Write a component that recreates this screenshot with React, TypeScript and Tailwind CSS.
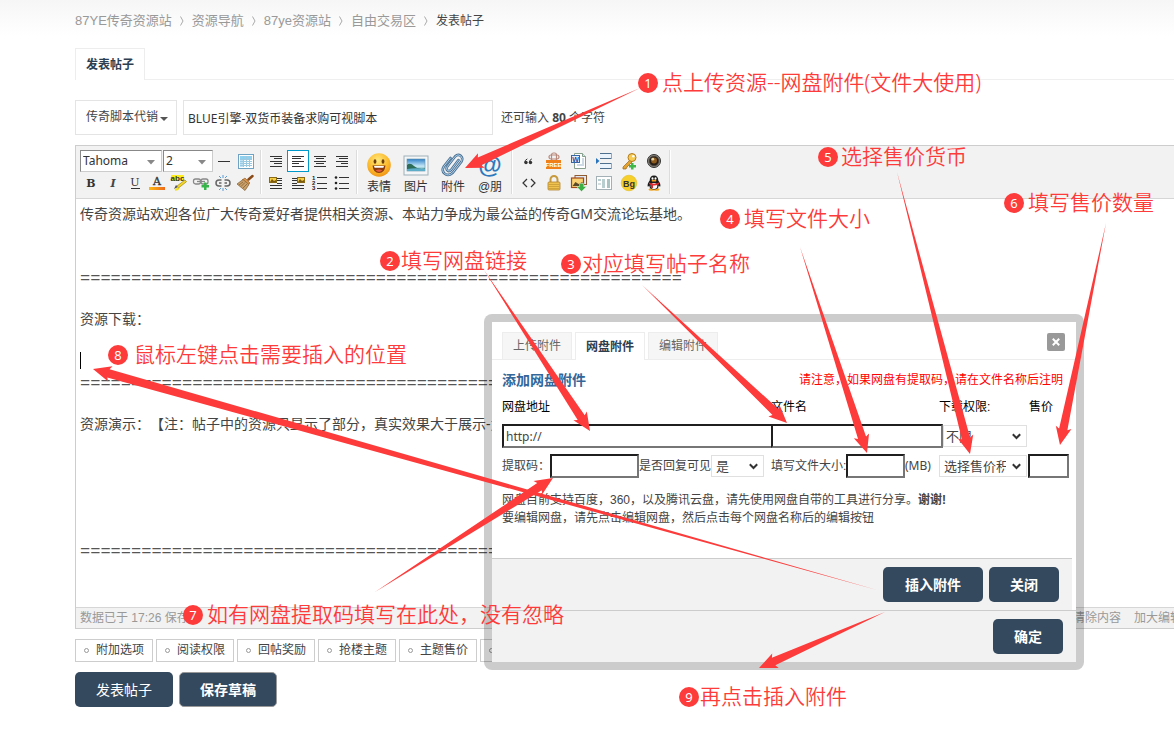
import React from "react";

const ui = "font-['Liberation_Sans','Noto_Sans_CJK_SC',sans-serif]";
const yahei = "font-['Noto_Sans','Noto_Sans_CJK_SC',sans-serif]";

/* ---------- toolbar drawings ---------- */

function Lines({ rows, top = 4 }: { rows: [number, number][]; top?: number }) {
  return (
    <g stroke="#333" strokeWidth="1" shapeRendering="crispEdges">
      {rows.map(([a, b], i) => (
        <line key={i} x1={a} x2={b} y1={top + i * 2.5} y2={top + i * 2.5} />
      ))}
    </g>
  );
}

function Glyph({ children, size = 18 }: { children: React.ReactNode; size?: number }) {
  return (
    <svg width={size} height={size} viewBox={`0 0 ${size} ${size}`} aria-hidden="true">
      {children}
    </svg>
  );
}

const serif = "'DejaVu Serif', serif";
const sans = "'Liberation Sans', sans-serif";

const icons: Record<string, React.ReactNode> = {
  hr: <path d="M3 9.5h12" stroke="#333" strokeWidth="1" shapeRendering="crispEdges" />,
  table: (
    <g shapeRendering="crispEdges">
      <rect x="1.5" y="2.5" width="15" height="14" fill="#fff" stroke="#6fa3c4" />
      <rect x="3" y="4" width="12" height="3" fill="#8fd0ee" />
      <rect x="3" y="7" width="3" height="8" fill="#bfe3f5" />
      <path d="M3 7.5h12M3 9.5h12M3 11.5h12M3 13.5h12M6.5 4v11M9.5 4v11M12.5 4v11" stroke="#9cc9e0" strokeWidth="1" fill="none" />
    </g>
  ),
  bold: <text x="9" y="13" textAnchor="middle" fontFamily={serif} fontWeight="700" fontSize="11" fill="#333">B</text>,
  italic: <text x="9" y="13" textAnchor="middle" fontFamily={serif} fontStyle="italic" fontWeight="700" fontSize="11" fill="#444">I</text>,
  underline: (
    <g>
      <text x="9" y="12" textAnchor="middle" fontFamily={serif} fontSize="11" fill="#333">U</text>
      <path d="M5 14.5h9" stroke="#333" shapeRendering="crispEdges" />
    </g>
  ),
  color: (
    <g>
      <defs>
        <linearGradient id="bar" x1="0" x2="1">
          <stop offset="0" stopColor="#fdb913" />
          <stop offset="1" stopColor="#ee6a1b" />
        </linearGradient>
      </defs>
      <text x="9" y="11" textAnchor="middle" fontFamily={serif} fontSize="11" fill="#333" stroke="#333" strokeWidth="0.3">A</text>
      <rect x="1" y="13" width="16" height="3" fill="url(#bar)" />
    </g>
  ),
  marker: (
    <g>
      <rect x="1" y="1" width="13" height="6" fill="#ffee1c" />
      <text x="7.500" y="6.500" textAnchor="middle" fontFamily={sans} fontSize="8" fontWeight="700" fill="#333">abc</text>
      <path d="M4 15l2-4 2 2z" fill="#555" />
      <path d="M5 16q3-1 4-2" stroke="#f5e11a" strokeWidth="2" fill="none" />
      <path d="M7 12l8-6 1.500 1.700-8 6.300z" fill="#f6d724" stroke="#a08a1a" strokeWidth=".7" />
    </g>
  ),
  link: (
    <g>
      <g fill="none" stroke="#888" strokeWidth="1.300">
        <rect x="1.500" y="5" width="7" height="5" rx="2" />
        <rect x="9" y="5" width="7" height="5" rx="2" />
        <path d="M5 7.500h8" />
      </g>
      <path d="M12 8.500h2.500v2.500H17v2.500h-2.500V16H12v-2.500H9.500V11H12z" fill="#36b54a" />
    </g>
  ),
  unlink: (
    <g fill="none">
      <g stroke="#666" strokeWidth="1.500">
        <path d="M7.500 6H5a3 3 0 000 6h2.500M10.500 6H13a3 3 0 010 6h-2.500M5 9h2.500M10.500 9H13" />
      </g>
      <path d="M5 2l2 2M9 1v3M13 2l-2 2M5 16l2-2M9 17v-3M13 16l-2-2" stroke="#5b9bd5" strokeWidth="1" />
    </g>
  ),
  brush: (
    <g>
      <path d="M16.500 2l-4 3.500" stroke="#8a4a16" strokeWidth="2.500" strokeLinecap="round" />
      <path d="M9 4l5 5-2 2-6-5z" fill="#d9944a" stroke="#8d5722" strokeWidth=".6" />
      <path d="M7 5.500l6 5-4 6L1 10z" fill="#caa06a" stroke="#7b5a31" strokeWidth=".7" />
      <path d="M3 11l4-3M5 12.500l4-4M7 14l4-4" stroke="#7b5a31" strokeWidth=".7" />
    </g>
  ),
  indent: <Lines rows={[[3, 15], [7, 15], [3, 15], [7, 15], [3, 15]]} />,
  left: <Lines rows={[[3, 15], [3, 12], [3, 15], [3, 10], [3, 15]]} />,
  center: <Lines rows={[[3, 15], [5, 13], [3, 15], [5, 13], [3, 15]]} />,
  right: <Lines rows={[[3, 15], [6, 15], [3, 15], [8, 15], [3, 15]]} />,
  floatLeft: (
    <g>
      <Lines rows={[[10, 15], [10, 15], [10, 15], [3, 15], [3, 15]]} top={4} />
      <rect x="2.500" y="3.500" width="7" height="5" fill="#f7cf43" stroke="#8a6a14" />
      <path d="M3 8l2-3 2 2 2-1v2z" fill="#7a5a10" />
    </g>
  ),
  floatRight: (
    <g>
      <Lines rows={[[3, 8], [3, 8], [3, 8], [3, 15], [3, 15]]} top={4} />
      <rect x="8.500" y="3.500" width="7" height="5" fill="#f7cf43" stroke="#8a6a14" />
      <path d="M9 8l2-3 2 2 2-1v2z" fill="#7a5a10" />
    </g>
  ),
  ordered: (
    <g>
      <g fontFamily={sans} fontWeight="700" fontSize="6" fill="#222">
        <text x="1" y="6">1</text>
        <text x="1" y="11">2</text>
        <text x="1" y="16">3</text>
      </g>
      <path d="M6 3.500h10M6 9.500h10M6 14.500h10" stroke="#333" shapeRendering="crispEdges" />
    </g>
  ),
  bullets: (
    <g>
      <circle cx="3" cy="3.500" r="1.300" fill="#222" />
      <circle cx="3" cy="9" r="1.300" fill="#222" />
      <circle cx="3" cy="14.500" r="1.300" fill="#222" />
      <path d="M6 3.500h10M6 9.500h10M6 14.500h10" stroke="#333" shapeRendering="crispEdges" />
    </g>
  ),
  quote: (
    <g fill="#333">
      <circle cx="6" cy="10.500" r="1.700" />
      <circle cx="10.500" cy="10.500" r="1.700" />
      <path d="M4.800 10.500q0-2.500 2.500-3.600M9.300 10.500q0-2.500 2.500-3.600" stroke="#333" strokeWidth="1" fill="none" />
    </g>
  ),
  free: (
    <g>
      <g fill="none" stroke="#b98a7c" strokeWidth="1.200">
        <rect x="6.500" y="1" width="5" height="8" rx="2" />
        <rect x="4" y="3" width="10" height="4" rx="2" />
      </g>
      <rect x="1" y="8" width="15" height="9" fill="#f0801a" />
      <text x="8.500" y="15" textAnchor="middle" fontFamily={sans} fontWeight="700" fontSize="6" fill="#fff">FREE</text>
    </g>
  ),
  word: (
    <g>
      <path d="M4.500 1.500h8l3 3v12h-11z" fill="#fff" stroke="#86a08d" />
      <path d="M12.500 1.500v3h3" fill="#d8e6ee" stroke="#86a08d" />
      <path d="M12 7h2M12 9h2M12 11h2M7 13h7" stroke="#9bb4c9" />
      <rect x="1.500" y="3.500" width="8" height="7" fill="#e8f1fb" stroke="#3567a8" />
      <text x="5.500" y="9.500" textAnchor="middle" fontFamily={sans} fontWeight="700" fontSize="7" fill="#1c4f9c">W</text>
    </g>
  ),
  page: (
    <g>
      <path d="M5 1.500h11.500v5H5M5 16.500h11.500v-5H5" fill="#eaf3fb" />
      <path d="M5 1.500h11M5 6.500h12M5 11.500h12M5 16.500h11" stroke="#4f6f8e" shapeRendering="crispEdges" />
      <path d="M16.500 1v6M16.500 11v6" stroke="#8eabc5" />
      <path d="M1 6l3.500 3L1 12z" fill="#2874bd" />
    </g>
  ),
  key: (
    <g>
      <path d="M10 8l-7 7v2h3l1-2 5-5z" fill="#e5a32e" stroke="#96651b" strokeWidth=".7" />
      <circle cx="12" cy="5.500" r="4" fill="#f6cc52" stroke="#b47b20" />
      <circle cx="13.300" cy="4.300" r="1.200" fill="#fff" />
      <path d="M11 11h2.500v2H16v2.500h-2.500v2H11v-2H9V13h2z" fill="#41b649" />
    </g>
  ),
  lens: (
    <g>
      <circle cx="9" cy="9" r="6.500" fill="#8d8880" stroke="#333" strokeWidth="1" />
      <circle cx="9" cy="9" r="4.800" fill="#251d16" stroke="#44403a" strokeWidth=".8" />
      <circle cx="9" cy="8.500" r="3" fill="#8b5a1d" />
      <circle cx="7.800" cy="7.200" r="1.400" fill="#e8d3a2" />
    </g>
  ),
  code: <path d="M7 5L3 9l4 4M11 5l4 4-4 4" fill="none" stroke="#333" strokeWidth="1.200" />,
  lock: (
    <g>
      <path d="M5.500 9V5.500a3.500 3.500 0 017 0V9" fill="none" stroke="#c79a3c" strokeWidth="2" />
      <rect x="3" y="8" width="12" height="8" rx="1" fill="#efc24f" stroke="#b1832d" strokeWidth=".8" />
      <path d="M3.500 10.500h11M3.500 12.500h11M3.500 14.500h11" stroke="#c99a36" strokeWidth=".8" />
    </g>
  ),
  pics: (
    <g>
      <rect x="5" y="1.500" width="11.500" height="9" fill="#dfeaf6" stroke="#915a31" />
      <rect x="1.500" y="4" width="12" height="9.500" fill="#f8d273" stroke="#a34a1d" strokeWidth="1.200" />
      <path d="M2.500 12l3-4 3 2 4-2v4z" fill="#5b4a2a" />
      <path d="M9.500 9.500h4v3h3l-5 5-5-5h3z" fill="#3cb043" stroke="#e7f5e7" strokeWidth=".5" />
    </g>
  ),
  columns: (
    <g shapeRendering="crispEdges">
      <rect x="1.500" y="2.500" width="15" height="13" fill="#fff" stroke="#a3b0b5" />
      <rect x="3" y="5" width="3" height="2" fill="#b9cfcf" />
      <rect x="3" y="9" width="3" height="2" fill="#d5dede" />
      <rect x="7" y="5" width="3" height="9" fill="#b9cfcf" />
      <rect x="12" y="5" width="3" height="9" fill="#a9c2c2" />
    </g>
  ),
  bg: (
    <g>
      <circle cx="9" cy="9" r="7.800" fill="#f6cf2a" stroke="#e2bb20" strokeWidth=".6" />
      <text x="9" y="12.500" textAnchor="middle" fontFamily={sans} fontWeight="700" fontSize="9" fill="#333">Bg</text>
    </g>
  ),
  penguin: (
    <g>
      <ellipse cx="6.500" cy="15.500" rx="3" ry="1.300" fill="#f2a41f" />
      <ellipse cx="11.500" cy="15.500" rx="3" ry="1.300" fill="#f2a41f" />
      <path d="M9 1.500c3 0 4.300 2 4.300 5 1.500 2 2.500 4 2 6-.5.500-1-.3-1.500-1-.5 3-2 4-4.800 4s-4.300-1-4.800-4c-.5.700-1 1.500-1.500 1-.5-2 .5-4 2-6 0-3 1.300-5 4.300-5z" fill="#1b1b1b" />
      <ellipse cx="9" cy="12" rx="3.300" ry="3" fill="#fff" />
      <ellipse cx="7.500" cy="4.500" rx="1" ry="1.300" fill="#fff" />
      <ellipse cx="10.500" cy="4.500" rx="1" ry="1.300" fill="#fff" />
      <ellipse cx="9" cy="6.700" rx="2.500" ry=".9" fill="#f2a41f" />
      <path d="M4 8.500q5 2.500 10 0v1.700q-3 1.500-6 1.300v2.500H6v-3L4 10z" fill="#e0282c" />
    </g>
  ),
};

const bigIcons: Record<string, React.ReactNode> = {
  表情: (
    <g>
      <defs>
        <radialGradient id="face" cx=".45" cy=".3" r=".75">
          <stop offset="0" stopColor="#ffe97a" />
          <stop offset=".6" stopColor="#fcb92c" />
          <stop offset="1" stopColor="#ee8d12" />
        </radialGradient>
      </defs>
      <circle cx="13" cy="13" r="11.800" fill="url(#face)" />
      <ellipse cx="9" cy="9.500" rx="1.400" ry="2.200" fill="#6b3d10" />
      <ellipse cx="17" cy="9.500" rx="1.400" ry="2.200" fill="#6b3d10" />
      <path d="M6.500 13.500h13q-.8 7.500-6.500 7.500t-6.500-7.500z" fill="#8a3a0c" />
      <path d="M8 14h10l-.6 1.800H8.600z" fill="#fff" />
      <path d="M9.500 18.500q3.500-2 7 0-3.500 2.800-7 0z" fill="#e6593c" />
    </g>
  ),
  图片: (
    <g>
      <defs>
        <linearGradient id="sky" x2="0" y2="1">
          <stop offset="0" stopColor="#2f7fc8" />
          <stop offset=".6" stopColor="#c5e8f7" />
          <stop offset="1" stopColor="#4a9a9a" />
        </linearGradient>
      </defs>
      <rect x="1" y="4" width="24" height="19" fill="#f4f6f7" stroke="#9db0ba" />
      <rect x="4" y="7" width="18" height="12" fill="url(#sky)" stroke="#6794ac" strokeWidth=".6" />
      <path d="M4 13q3-3 7 1t11 2.500v1H4z" fill="#2d6c57" />
      <path d="M4 17q9-1.500 18 0v2H4z" fill="#5dacc8" />
    </g>
  ),
  附件: (
    <g fill="none" strokeLinecap="round">
      <path d="M18.500 8L11 18q-1.800 1.800-3.500.5t-.4-3.700L15 4.500q3-3 5.700-.7t.8 5.800L12.500 21q-4 3.500-7.700.7t-1-7.200L10.500 6" stroke="#4f7190" strokeWidth="2.600" />
      <path d="M18.500 8L11 18q-1.800 1.800-3.500.5t-.4-3.700L15 4.500q3-3 5.700-.7t.8 5.800L12.500 21q-4 3.500-7.700.7t-1-7.200L10.500 6" stroke="#a6d3f5" strokeWidth="1" />
    </g>
  ),
  "@朋": (
    <text x="13" y="21" textAnchor="middle" fontFamily={sans} fontWeight="700" fontSize="24" fill="#2e79bd">@</text>
  ),
};

function Tool({ name, label, active, wide }: { name: string; label: string; active?: boolean; wide?: boolean }) {
  return (
    <button
      type="button"
      aria-label={label}
      className={
        "flex h-[22px] items-center justify-center border " +
        (wide ? "w-[25px] " : "w-[22px] ") +
        (active ? "border-[#0099cc] bg-white" : "border-transparent")
      }
    >
      <span className="shrink-0"><Glyph>{icons[name]}</Glyph></span>
    </button>
  );
}

function Separator() {
  return <span className="mx-[3px] h-11 w-[2px] shrink-0 border-l border-r border-l-[#dcdcdc] border-r-white" />;
}

function ToolSelect({ value, label, className }: { value: string; label: string; className: string }) {
  return (
    <span className={"grid h-[22px] border border-[#ccc] border-t-[#888] border-l-[#888] bg-white " + className}>
      <select aria-label={label} className={"col-start-1 row-start-1 appearance-none pb-px pl-[2px] text-xs leading-[18px] text-[#333] " + yahei}>
        <option>{value}</option>
      </select>
      <svg className="pointer-events-none col-start-1 row-start-1 mt-[2px] mr-[6px] self-center justify-self-end" width="8" height="5" viewBox="0 0 8 5" aria-hidden="true">
        <path d="M0 0h8L4 4.500z" fill="#888" />
      </svg>
    </span>
  );
}

function Toolbar() {
  return (
    <div className="flex h-[53px] items-start border-b border-[#d6d6d6] bg-[#f2f2f2] pt-1 pl-1" role="toolbar">
      <div className="w-[177px] shrink-0">
        <div className="flex">
          <ToolSelect value="Tahoma" label="字体" className="w-[82px]" />
          <ToolSelect value="2" label="字号" className="ml-px w-[50px]" />
          <Tool name="hr" label="分隔线" />
          <Tool name="table" label="表格" />
        </div>
        <div className="flex">
          <Tool name="bold" label="粗体" />
          <Tool name="italic" label="斜体" />
          <Tool name="underline" label="下划线" />
          <Tool name="color" label="颜色" />
          <Tool name="marker" label="背景色" />
          <Tool name="link" label="链接" />
          <Tool name="unlink" label="移除链接" />
          <Tool name="brush" label="清除格式" />
        </div>
      </div>
      <Separator />
      <div className="grid shrink-0 grid-cols-4">
        <Tool name="indent" label="自动排版" />
        <Tool name="left" label="居左" active />
        <Tool name="center" label="居中" />
        <Tool name="right" label="居右" />
        <Tool name="floatLeft" label="左浮动" />
        <Tool name="floatRight" label="右浮动" />
        <Tool name="ordered" label="有序列表" />
        <Tool name="bullets" label="无序列表" />
      </div>
      <Separator />
      <div className="flex shrink-0 gap-px">
        {Object.keys(bigIcons).map((name) => (
          <button key={name} type="button" className="flex w-9 flex-col items-center pt-[2px]">
            <Glyph size={26}>{bigIcons[name]}</Glyph>
            <span className="text-xs leading-[18px] whitespace-nowrap text-[#333]">{name}</span>
          </button>
        ))}
      </div>
      <Separator />
      <div className="grid shrink-0 grid-cols-6">
        <Tool wide name="quote" label="引用" />
        <Tool wide name="free" label="免费信息" />
        <Tool wide name="word" label="从 Word 粘贴" />
        <Tool wide name="page" label="分页" />
        <Tool wide name="key" label="密码" />
        <Tool wide name="lens" label="镜头" />
        <Tool wide name="code" label="代码" />
        <Tool wide name="lock" label="隐藏内容" />
        <Tool wide name="pics" label="下载远程图片" />
        <Tool wide name="columns" label="目录" />
        <Tool wide name="bg" label="帖子背景" />
        <Tool wide name="penguin" label="QQ表情" />
      </div>
      <Separator />
    </div>
  );
}

/* ---------- editor ---------- */

const rule = "=".repeat(59);

const postLines = [
  "传奇资源站欢迎各位广大传奇爱好者提供相关资源、本站力争成为最公益的传奇GM交流论坛基地。",
  "", "", rule, "",
  "资源下载：",
  "", "|", rule, "",
  "资源演示：【注：帖子中的资源只显示了部分，真实效果大于展示-为准】",
  "", "", "", "", "",
  rule,
];

function Editor() {
  return (
    <div className="mt-[10px] border border-r-0 border-[#cdcdcd]">
      <Toolbar />
      <div role="textbox" aria-label="帖子内容" aria-multiline="true" className={"min-h-[408px] pt-1 pl-1 text-sm leading-[21px] whitespace-nowrap text-[#444] [text-spacing-trim:space-all] " + yahei}>
        {postLines.map((line, i) =>
          line === "|" ? (
            <div key={i} className="flex h-[21px] items-center"><span className="h-[17px] w-px bg-black" /></div>
          ) : line === rule ? (
            <div key={i} className="h-[21px] font-['Liberation_Mono',monospace] text-[17px] leading-[25px] text-[#555]">{line}</div>
          ) : (
            <div key={i} className="h-[21px]">{line}</div>
          ),
        )}
      </div>
      <div className="flex h-[21px] items-center justify-between overflow-hidden border-t border-[#d6d6d6] bg-[#f2f2f2] pb-px pl-1 text-xs whitespace-nowrap text-[#999]">
        <span>数据已于 17:26 保存</span>
        <span className="-mr-2 flex gap-[13px]">
          <a href="#clear">清除内容</a>
          <a href="#bigger">加大编辑</a>
        </span>
      </div>
    </div>
  );
}

/* ---------- attachment dialog ---------- */

const inset = "border-2 border-[#767676] border-t-[#1f1f1f] border-l-[#1f1f1f] bg-white px-[2px] text-xs text-[#444] ";

function FormSelect({ value, label, className }: { value: string; label: string; className: string }) {
  return (
    <span className={"grid h-[22px] shrink-0 border border-[#e0e0e0] bg-white " + className}>
      <select aria-label={label} className={"col-start-1 row-start-1 w-full min-w-0 appearance-none pr-5 pb-px text-[13px] leading-5 text-[#444] " + yahei}>
        <option>{value}</option>
      </select>
      <svg className="pointer-events-none col-start-1 row-start-1 mr-[5px] self-center justify-self-end" width="9" height="7" viewBox="0 0 9 7" aria-hidden="true">
        <path d="M.8 1.300l3.700 3.700 3.700-3.700" fill="none" stroke="#333" strokeWidth="2" />
      </svg>
    </span>
  );
}

const dark = "h-[35px] rounded-[5px] bg-[#34495e] text-sm font-bold text-white ";

function AttachDialog() {
  return (
    <div role="dialog" aria-label="附件" className="absolute top-[314px] left-[484px] w-[600px] rounded-lg border-8 border-black/20 bg-white bg-clip-padding text-xs whitespace-nowrap text-[#444]">
      <div className="flex h-[38px] items-end gap-[3px] border-b border-[#ededed] pr-[11px] pl-[10px]">
        <button type="button" className="h-[27px] w-[70px] border border-b-0 border-[#ededed] bg-[#f6f6f6] text-[#666]">上传附件</button>
        <button type="button" className="-mb-px h-7 w-[70px] border border-b-0 border-[#ededed] bg-white font-bold text-[#2c3e50]">网盘附件</button>
        <button type="button" className="h-[27px] w-[70px] border border-b-0 border-[#ededed] bg-[#f6f6f6] text-[#666]">编辑附件</button>
        <button type="button" aria-label="关闭窗口" className="mb-2 ml-auto flex size-[18px] items-center justify-center rounded-[2px] bg-[#999]">
          <svg width="8" height="8" viewBox="0 0 8 8" aria-hidden="true"><path d="M.8.8l6.400 6.400M7.200.8L.8 7.200" stroke="#fff" strokeWidth="2" /></svg>
        </button>
      </div>
      <form className="pt-[10px] pr-[7px] pb-[31px] pl-[10px]">
        <div className="flex h-5 items-center justify-between pr-[6px]">
          <h3 className="text-sm font-bold text-[#336699]">添加网盘附件</h3>
          <p className="text-[#ff0000]">请注意，如果网盘有提取码，请在文件名称后注明</p>
        </div>
        <div className="mt-[5px] flex h-6 items-center text-black">
          <label htmlFor="url" className="w-[269px]">网盘地址</label>
          <label htmlFor="name" className="w-[168px]">文件名</label>
          <span className="w-[90px]">下载权限:</span>
          <label htmlFor="price">售价</label>
        </div>
        <div className="mt-[5px] flex items-center">
          <input id="url" defaultValue="http://" className={inset + "h-6 w-[269px] border-r-0 " + yahei} />
          <input id="name" className={inset + "h-6 w-[172px]"} />
          <FormSelect value="不限" label="下载权限" className="w-[84px] pl-[2px]" />
        </div>
        <div className="mt-[6px] flex items-center">
          <label htmlFor="code" className="w-12 leading-5">提取码：</label>
          <input id="code" className={inset + "h-6 w-[89px]"} />
          <span className="w-[72px] leading-5">是否回复可见</span>
          <FormSelect value="是" label="是否回复可见" className="w-[53px] pl-[4px]" />
          <label htmlFor="size" className="ml-[7px] w-[75px] leading-5">填写文件大小:</label>
          <input id="size" className={inset + "h-6 w-[59px]"} />
          <span className={"w-[26px] leading-5 " + yahei}>(MB)</span>
          <FormSelect value="选择售价积分" label="售价货币" className="ml-2 w-[88px] pl-[4px]" />
          <input id="price" className={inset + "ml-px h-6 w-[41px]"} />
        </div>
        <div className="mt-[13px] leading-[18px]">
          <p>网盘目前支持百度，360，以及腾讯云盘，请先使用网盘自带的工具进行分享。<b>谢谢!</b></p>
          <p>要编辑网盘，请先点击编辑网盘，然后点击每个网盘名称后的编辑按钮</p>
        </div>
      </form>
      <div className="mr-1 flex h-[52px] justify-end gap-[6px] border-t border-[#ccc] bg-[#f2f2f2] pt-2 pr-[13px]">
        <button type="button" className={dark + "w-[100px]"}>插入附件</button>
        <button type="button" className={dark + "w-[70px]"}>关闭</button>
      </div>
      <div className="flex h-[52px] justify-end border-t border-[#ccc] bg-[#f2f2f2] pt-2 pr-[13px]">
        <button type="button" className={dark + "w-[70px]"}>确定</button>
      </div>
    </div>
  );
}

/* ---------- numbered notes laid over the page ---------- */

const arrows = [
  [640, 88, 465, 168],
  [484, 270, 590, 431],
  [642, 285, 787, 423],
  [800, 247, 867, 453],
  [897, 172, 970, 454],
  [1106, 223, 1060, 445],
  [375, 592, 553, 478],
  [877, 590, 93, 369],
  [885, 612, 759, 668],
];

function arrowPoints([x1, y1, x2, y2]: number[]) {
  const len = Math.hypot(x2 - x1, y2 - y1);
  const ux = (x2 - x1) / len;
  const uy = (y2 - y1) / len;
  const at = (back: number, side: number) => `${x2 - ux * back - uy * side},${y2 - uy * back + ux * side}`;
  return [`${x1},${y1}`, at(16, 4.2), at(18, 8), `${x2},${y2}`, at(18, -8), at(16, -4.2)].join(" ");
}

const notes = [
  { n: 1, text: "点上传资源--网盘附件(文件大使用)", pos: "left-[638px] top-[68px]", gap: "gap-1" },
  { n: 2, text: "填写网盘链接", pos: "left-[380px] top-[246px]", gap: "gap-px" },
  { n: 3, text: "对应填写帖子名称", pos: "left-[561px] top-[249px]", gap: "gap-px" },
  { n: 4, text: "填写文件大小", pos: "left-[720px] top-[204px]", gap: "gap-1" },
  { n: 5, text: "选择售价货币", pos: "left-[818px] top-[142px]", gap: "gap-[3px]" },
  { n: 6, text: "填写售价数量", pos: "left-[1004px] top-[188px]", gap: "gap-1" },
  { n: 7, text: "如有网盘提取码填写在此处，没有忽略", pos: "left-[183px] top-[600px]", gap: "gap-1" },
  { n: 8, text: "鼠标左键点击需要插入的位置", pos: "left-[108px] top-[340px]", gap: "gap-[6px]" },
  { n: 9, text: "再点击插入附件", pos: "left-[679px] top-[682px]", gap: "gap-px" },
];

function Notes() {
  return (
    <div className="pointer-events-none">
      <svg className="absolute top-0 left-0" width="1174" height="750" viewBox="0 0 1174 750" aria-hidden="true">
        {arrows.map((a, i) => (
          <polygon key={i} points={arrowPoints(a)} fill="#fc3b3a" />
        ))}
      </svg>
      {notes.map(({ n, text, pos, gap }) => (
        <div key={n} className={`absolute flex h-[30px] items-center text-[21px] whitespace-nowrap text-[#fc3b3a] ${yahei} ${pos} ${gap}`}>
          <span className="flex size-5 items-center justify-center rounded-full bg-[#fc3b3a] text-[13px] leading-5 text-white">{n}</span>
          <span className="pb-[2px] leading-7 font-[350]">{text}</span>
        </div>
      ))}
    </div>
  );
}

/* ---------- page ---------- */

const crumbs = ["87YE传奇资源站", "资源导航", "87ye资源站", "自由交易区"];
const options = ["附加选项", "阅读权限", "回帖奖励", "抢楼主题", "主题售价", "文章设置"];

export default function App() {
  return (
    <div className={"relative min-h-screen overflow-hidden bg-white text-xs text-[#444] " + ui}>
      <div className="bg-linear-to-b from-[#f6f6f6] to-white to-[36px] pb-[43px] pl-[75px]">
        <nav className="flex h-12 items-center pb-[7px] whitespace-nowrap">
          {crumbs.map((c) => (
            <React.Fragment key={c}>
              <a href="#crumb" className="text-[13px] text-[#999]">{c}</a>
              <svg className="mx-2 shrink-0" width="4" height="10" viewBox="0 0 4 10" aria-hidden="true">
                <path d="M.5.5L3 5 .5 9.500" fill="none" stroke="#aaa" />
              </svg>
            </React.Fragment>
          ))}
          <span>发表帖子</span>
        </nav>
        <div className="flex border-b border-[#efefef]">
          <a href="#post" className="-mb-px flex h-8 w-[70px] items-center justify-center border border-b-0 border-[#ededed] bg-white font-bold text-[#2c3e50]">发表帖子</a>
        </div>
        <div className="mt-5 flex items-center">
          <span className="grid h-[35px] w-[102px] border border-[#e4e4e4] bg-white">
            <select aria-label="主题分类" className="col-start-1 row-start-1 appearance-none pb-[2px] pl-[10px] text-xs text-[#444]">
              <option>传奇脚本代销</option>
            </select>
            <svg className="pointer-events-none col-start-1 row-start-1 mt-[3px] mr-2 self-center justify-self-end" width="8" height="4" viewBox="0 0 8 4" aria-hidden="true">
              <path d="M0 0h8L4 4z" fill="#555" />
            </svg>
          </span>
          <input aria-label="标题" defaultValue="BLUE引擎-双货币装备求购可视脚本" className={"ml-[6px] h-[35px] w-[310px] border border-[#e4e4e4] px-1 text-xs text-[#333] " + yahei} />
          <span className={"ml-2 " + yahei}>还可输入 <b>80</b> 个字符</span>
        </div>
        <Editor />
        <div className="mt-[10px] flex gap-[3px] whitespace-nowrap">
          {options.map((o) => (
            <button key={o} type="button" className="flex h-[23px] w-[78px] items-center gap-[7px] border border-[#cdcdcd] bg-white pb-px pl-2">
              <span className="size-[5px] rounded-full border border-[#999]" />
              {o}
            </button>
          ))}
        </div>
        <div className="mt-[10px] flex gap-[6px]">
          <button type="submit" className="h-[35px] w-[98px] rounded-[5px] bg-[#34495e] text-sm text-white">发表帖子</button>
          <button type="button" className="h-[35px] w-[98px] rounded-[5px] border border-[#999] bg-[#34495e] text-sm font-bold text-white">保存草稿</button>
        </div>
      </div>
      <AttachDialog />
      <Notes />
    </div>
  );
}
